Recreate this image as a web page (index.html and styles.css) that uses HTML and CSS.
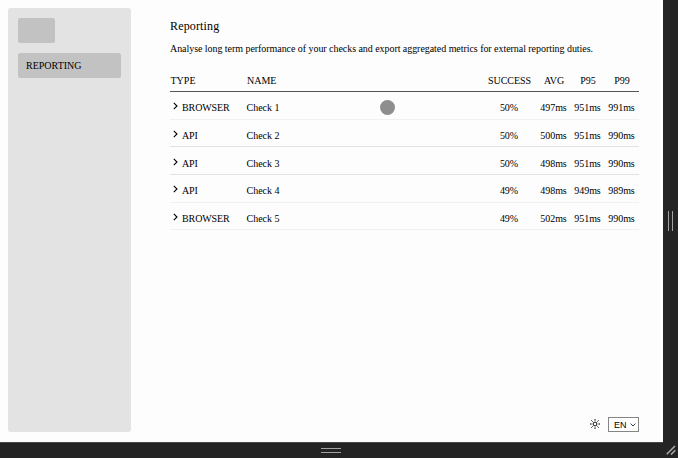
FILE: index.html
```
<!DOCTYPE html>
<html lang="en">
<head>
<meta charset="utf-8">
<title>Reporting</title>
<link rel="stylesheet" href="styles.css">
</head>
<body>
<div class="frame">
  <div class="viewport">
    <aside class="sidebar">
      <div class="logo"></div>
      <a class="nav-item">REPORTING</a>
    </aside>
    <main class="content">
      <h1 class="title">Reporting</h1>
      <p class="intro">Analyse long term performance of your checks and export aggregated metrics for external reporting duties.</p>
      <div class="table">
        <div class="row head"><span>TYPE</span><span>NAME</span><span class="num">SUCCESS</span><span class="num">AVG</span><span class="num">P95</span><span class="num">P99</span></div>
        <div class="row soft"><span class="type"><svg class="chevron" viewBox="0 0 5 8"><path d="M.8 .8 4 4 .8 7.2"/></svg>BROWSER</span><span>Check 1</span><span class="num">50%</span><span class="num">497ms</span><span class="num">951ms</span><span class="num">991ms</span></div>
        <div class="row"><span class="type"><svg class="chevron" viewBox="0 0 5 8"><path d="M.8 .8 4 4 .8 7.2"/></svg>API</span><span>Check 2</span><span class="num">50%</span><span class="num">500ms</span><span class="num">951ms</span><span class="num">990ms</span></div>
        <div class="row"><span class="type"><svg class="chevron" viewBox="0 0 5 8"><path d="M.8 .8 4 4 .8 7.2"/></svg>API</span><span>Check 3</span><span class="num">50%</span><span class="num">498ms</span><span class="num">951ms</span><span class="num">990ms</span></div>
        <div class="row soft"><span class="type"><svg class="chevron" viewBox="0 0 5 8"><path d="M.8 .8 4 4 .8 7.2"/></svg>API</span><span>Check 4</span><span class="num">49%</span><span class="num">498ms</span><span class="num">949ms</span><span class="num">989ms</span></div>
        <div class="row soft"><span class="type"><svg class="chevron" viewBox="0 0 5 8"><path d="M.8 .8 4 4 .8 7.2"/></svg>BROWSER</span><span>Check 5</span><span class="num">49%</span><span class="num">502ms</span><span class="num">951ms</span><span class="num">990ms</span></div>
      </div>
      <footer class="footer">
        <svg class="sun" viewBox="0 0 10 10"><circle cx="5" cy="5" r="1.9"/><path d="M5 0v1.7M5 8.3V10M0 5h1.7M8.3 5H10M1.4 1.4l1.2 1.2M7.4 7.4l1.2 1.2M1.4 8.6l1.2-1.2M7.4 2.6l1.2-1.2"/></svg>
        <div class="select"><span>EN</span><svg class="caret" viewBox="0 0 6 4"><path d="M.6 .6 3 3 5.4 .6"/></svg></div>
      </footer>
    </main>
    <div class="pointer"></div>
  </div>
  <div class="edge-right"><i class="grip-v"></i></div>
  <div class="edge-bottom"><i class="grip-h"></i></div>
  <div class="corner"><svg class="resize" viewBox="0 0 10 10"><path d="M.7 9.3 9 1M5 9.6 9.3 5.3"/></svg></div>
</div>
</body>
</html>
```
FILE: styles.css
```
* { box-sizing: border-box; }
body { margin: 0; font: 10px/12px "Liberation Serif", "Times New Roman", serif; color: #000; background: #242424; }
.frame { display: grid; grid-template-columns: 663px 15px; grid-template-rows: 442px 16px; width: 678px; height: 458px; overflow: hidden; }
.viewport { position: relative; display: flex; gap: 39px; padding: 8.4px 24px 9.6px 7.5px; background: #fdfdfd; }
.sidebar { width: 123.5px; padding: 9.6px 10px; background: #e3e3e3; border-radius: 3px; }
.logo { width: 37px; height: 25px; background: #c2c2c2; border-radius: 2.5px; }
.nav-item { display: flex; align-items: center; height: 25px; margin-top: 10px; padding: 1px 0 0 8.5px; background: #c2c2c2; border-radius: 2.5px; }
.content { flex: 1; display: flex; flex-direction: column; padding-top: 9.6px; }
.title { margin: 0; font-size: 12px; line-height: 16px; font-weight: 400; letter-spacing: .15px; }
.intro { margin: 9px 0 0; line-height: 12px; white-space: nowrap; letter-spacing: -.052px; }
.table { margin-top: 16px; }
.row { display: grid; grid-template-columns: 76.5px 235px 55px 34px 34px 34px; align-items: center; height: 27.7px; padding-top: 6px; border-bottom: 1px solid #e2e2e2; }
.row.soft { border-bottom-color: #f1f1f1; }
.row.head { height: 21px; padding: 0 0 0 .5px; border-bottom-color: #555; }
.num { text-align: center; letter-spacing: -.05px; }
.type { display: flex; align-items: center; gap: 4px; padding-left: 3px; letter-spacing: -.1px; }
.chevron { width: 5px; height: 8px; margin-top: -4px; fill: none; stroke: #000; stroke-width: 1.1; }
.footer { display: flex; justify-content: flex-end; align-items: center; gap: 8px; margin-top: auto; }
.sun { width: 10px; height: 10px; margin-top: -1px; fill: none; stroke: #111; stroke-width: 1; }
.select { display: flex; align-items: center; justify-content: space-between; width: 31px; height: 15px; padding: 1px 2px 0 5px; border: 1px solid #858585; background: #fff; font: 9px/11px "Liberation Sans", Arial, sans-serif; }
.caret { width: 6px; height: 4px; fill: none; stroke: #222; stroke-width: .9; }
.pointer { position: absolute; left: 380px; top: 100.4px; width: 15px; height: 15px; border-radius: 50%; background: #8e8e8e; }
.edge-right, .edge-bottom, .corner { display: flex; align-items: center; justify-content: center; background: #242424; }
.edge-bottom { padding-right: 1.5px; border-top: 1px solid #484848; }
.grip-v { width: 5px; height: 20px; border: solid #a2a2a2; border-width: 0 1px; }
.grip-h { width: 20px; height: 5px; border: solid #a2a2a2; border-width: 1px 0; }
.resize { width: 10px; height: 10px; fill: none; stroke: #aaa; stroke-width: 1.5; }
```
